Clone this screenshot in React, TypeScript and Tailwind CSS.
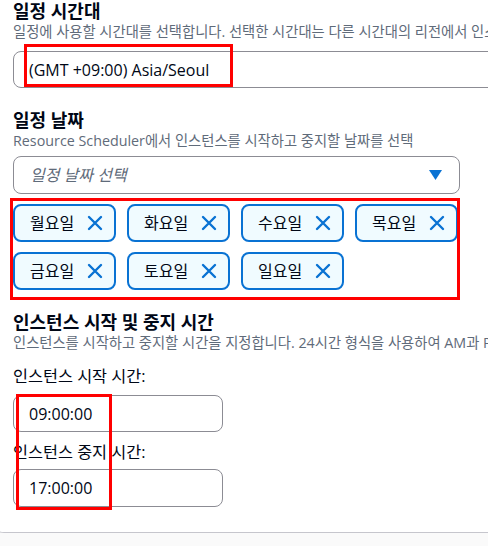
const font = { fontFamily: '"Open Sans", "Noto Sans CJK KR", sans-serif' };

const days = ['월요일', '화요일', '수요일', '목요일', '금요일', '토요일', '일요일'];

function XIcon() {
  return (
    <svg width="16" height="16" viewBox="0 0 16 16" fill="none">
      <path d="M2 2 L14 14 M14 2 L2 14" stroke="#0972d3" strokeWidth="2.4" strokeLinecap="round" />
    </svg>
  );
}

function Tag({ label }: { label: string }) {
  return (
    <div className="flex h-[38px] w-[103px] items-center justify-between rounded-[8px] border-2 border-[#0972d3] bg-[#f0fbff] pl-[15px] pr-[11px]">
      <span className="text-[16px] leading-[22px] text-[#000716]">{label}</span>
      <XIcon />
    </div>
  );
}

export default function App() {
  return (
    <div className="relative h-[546px] w-[488px] overflow-hidden bg-[#fafafa]" style={font}>
      {/* card */}
      <div className="-ml-[12px] h-[533px] w-[520px] rounded-bl-[16px] border-b border-l border-[#c6c6cd] bg-white pl-[24px]">
        {/* ── 1. Time zone ── */}
        <h2 className="text-[18px] font-bold leading-[22px] text-[#000716]">일정 시간대</h2>
        <p className="whitespace-nowrap text-[14.3px] leading-[20px] text-[#5f6b7a]">
          일정에 사용할 시간대를 선택합니다. 선택한 시간대는 다른 시간대의 리전에서 인스턴스를 시작합니다.
        </p>
        <div className="mt-[9px] flex h-[37px] w-[520px] items-center rounded-[8px] border border-[#8c8c94] pl-[15px] text-[16px] text-[#000716]">
          (GMT +09:00) Asia/Seoul
        </div>

        {/* ── 2. Dates ── */}
        <h2 className="mt-[21px] text-[18px] font-bold leading-[22px] text-[#000716]">일정 날짜</h2>
        <p className="whitespace-nowrap text-[14.3px] leading-[20px] text-[#5f6b7a]">
          Resource Scheduler에서 인스턴스를 시작하고 중지할 날짜를 선택
        </p>
        <div className="mt-[5px] flex h-[38px] w-[447px] items-center justify-between rounded-[8px] border border-[#8c8c94] pl-[16px] pr-[17px]">
          <span className="text-[16px] italic text-[#5f6b7a]">일정 날짜 선택</span>
          <svg width="13" height="10" viewBox="0 0 13 10">
            <path d="M0 0 H13 L6.5 10 Z" fill="#0972d3" />
          </svg>
        </div>
        <div className="mt-[10px] grid w-[450px] grid-cols-[repeat(4,103px)] gap-x-[11px] gap-y-[10px]">
          {days.map((d) => (
            <Tag key={d} label={d} />
          ))}
        </div>

        {/* ── 3. Start / stop time ── */}
        <h2 className="mt-[21px] text-[18px] font-bold leading-[22px] text-[#000716]">인스턴스 시작 및 중지 시간</h2>
        <p className="whitespace-nowrap text-[14.3px] leading-[20px] text-[#5f6b7a]">
          인스턴스를 시작하고 중지할 시간을 지정합니다. 24시간 형식을 사용하여 AM과 PM을 구분합니다.
        </p>
        <div className="mt-[12px] text-[16.3px] leading-[22px] text-[#000716]">인스턴스 시작 시간:</div>
        <div className="mt-[8px] flex h-[37px] w-[210px] items-center rounded-[8px] border border-[#8c8c94] pl-[15px] text-[16px] text-[#000716]">
          09:00:00
        </div>
        <div className="mt-[9px] text-[16.3px] leading-[22px] text-[#000716]">인스턴스 중지 시간:</div>
        <div className="mt-[6px] flex h-[38px] w-[210px] items-center rounded-[8px] border border-[#8c8c94] pl-[15px] text-[16px] text-[#000716]">
          17:00:00
        </div>
      </div>

      {/* annotation boxes */}
      <div className="pointer-events-none absolute left-[24px] top-[44px] h-[43px] w-[209px] border-[3px] border-[#ff0000]" />
      <div className="pointer-events-none absolute left-[10px] top-[198px] h-[102px] w-[450px] border-[3px] border-[#ff0000]" />
      <div className="pointer-events-none absolute left-[16px] top-[394px] h-[116px] w-[96px] border-[3px] border-[#ff0000]" />
    </div>
  );
}
